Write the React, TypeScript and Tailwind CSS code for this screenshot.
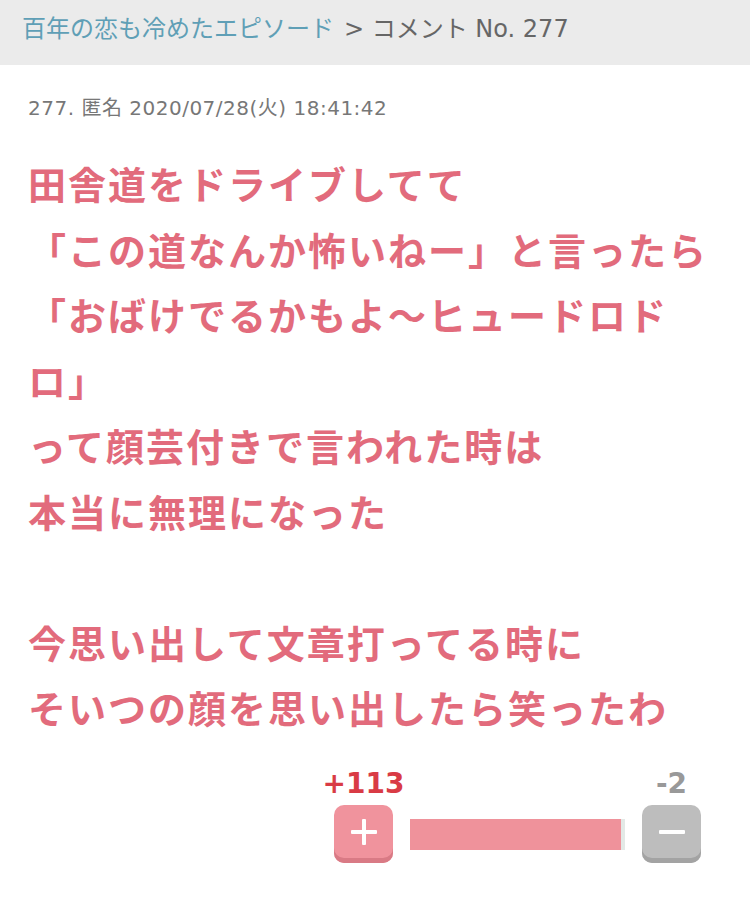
const jp = "font-['DejaVu_Sans','Noto_Sans_CJK_JP',sans-serif]";

const lines = [
  "田舎道をドライブしてて",
  "「この道なんか怖いねー」と言ったら",
  "「おばけでるかもよ〜ヒュードロドロ」",
  "って顔芸付きで言われた時は",
  "本当に無理になった",
  "",
  "今思い出して文章打ってる時に",
  "そいつの顔を思い出したら笑ったわ",
];

function VoteButton({ kind }: { kind: "plus" | "minus" }) {
  const plus = kind === "plus";
  return (
    <button
      className={`flex h-[58px] w-[59px] items-center justify-center rounded-[10px] ${
        plus
          ? "bg-[#f0939d] shadow-[inset_0_-5px_0_#d97a85]"
          : "bg-[#bdbdbd] shadow-[inset_0_-5px_0_#a3a3a3]"
      }`}
    >
      <svg width="30" height="30" viewBox="0 0 30 30" className="-mt-1">
        <rect x="2" y="13" width="26" height="4" rx="1" fill="#fff" />
        {plus && <rect x="13" y="2" width="4" height="26" rx="1" fill="#fff" />}
      </svg>
    </button>
  );
}

export default function App() {
  const up = 113;
  const down = 2;
  const ratio = (up / (up + down)) * 100;

  return (
    <div className={`min-h-[902px] w-[750px] bg-white ${jp}`}>
      {/* Breadcrumb */}
      <div className="flex h-[65px] items-center bg-[#ebebeb] px-[22px] pb-[7px] text-[24px] text-[#666]">
        <span className="text-[#5f9fb6]">百年の恋も冷めたエピソード</span>
        <span className="ml-[10px]">&gt; コメント No. 277</span>
      </div>

      <div className="px-[28px]">
        {/* Meta */}
        <div className="mt-[30px] text-[20px] leading-[26px] tracking-[0.5px] text-[#777]">
          277. 匿名 2020/07/28(火) 18:41:42
        </div>

        {/* Body */}
        <div className="mt-[29px] text-[38px] font-bold leading-[65.5px] tracking-[2px] text-[#e26b7c] font-['Noto_Sans_CJK_JP',sans-serif]">
          {lines.map((l, i) => (
            <div key={i} className="min-h-[65.5px]">
              {l}
            </div>
          ))}
        </div>
      </div>

      {/* Votes */}
      <div className="mt-[28px] flex justify-end pr-[49px]">
        <div className="flex items-end gap-[17px]">
          <div className="flex w-[59px] flex-col items-center">
            <span className="mb-[5px] whitespace-nowrap text-[28px] font-bold leading-[32px] text-[#d93b45]">
              +{up}
            </span>
            <VoteButton kind="plus" />
          </div>
          <div className="mb-[13px] h-[31px] w-[215px] bg-[#e3e9e6]">
            <div className="h-full bg-[#ef929b]" style={{ width: `${ratio}%` }} />
          </div>
          <div className="flex w-[59px] flex-col items-center">
            <span className="mb-[5px] whitespace-nowrap text-[28px] font-bold leading-[32px] text-[#999]">
              -{down}
            </span>
            <VoteButton kind="minus" />
          </div>
        </div>
      </div>
    </div>
  );
}
